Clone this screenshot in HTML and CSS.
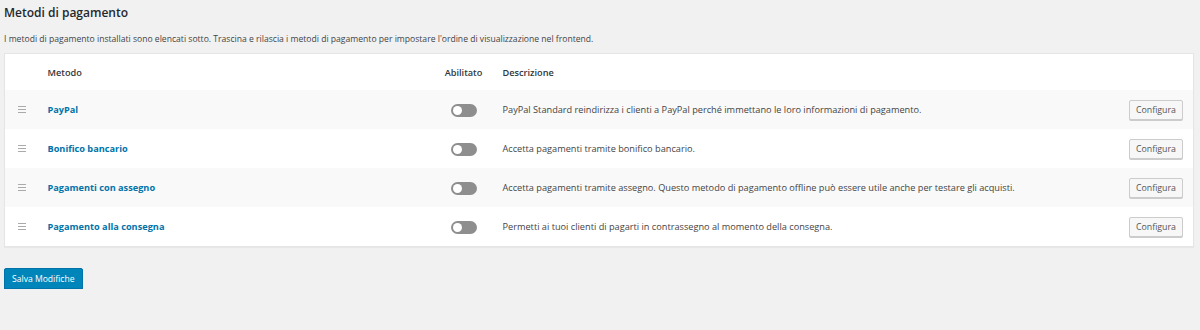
FILE: index.html
```html
<!DOCTYPE html>
<html lang="it">

<head>
    <meta charset="UTF-8">
    <meta name="viewport" content="width=device-width, initial-scale=1.0">
    <title>Metodi di pagamento</title>
    <link rel="stylesheet" href="styles.css">
</head>

<body>
    <h2 class="title">Metodi di pagamento</h2>
    <p class="intro">I metodi di pagamento installati sono elencati sotto. Trascina e rilascia i metodi di pagamento per impostare l'ordine di visualizzazione nel frontend.</p>

    <table class="gateways">
        <colgroup>
            <col class="col-sort">
            <col class="col-name">
            <col class="col-status">
            <col class="col-desc">
            <col class="col-action">
        </colgroup>
        <thead>
            <tr>
                <th></th>
                <th class="name">Metodo</th>
                <th class="status">Abilitato</th>
                <th class="desc">Descrizione</th>
                <th></th>
            </tr>
        </thead>
        <tbody>
            <tr>
                <td class="sort"><span class="handle"></span></td>
                <td class="name"><a href="#">PayPal</a></td>
                <td class="status"><span class="toggle"></span></td>
                <td class="desc">PayPal Standard reindirizza i clienti a PayPal perché immettano le loro informazioni di pagamento.</td>
                <td class="action"><button class="btn">Configura</button></td>
            </tr>
            <tr>
                <td class="sort"><span class="handle"></span></td>
                <td class="name"><a href="#">Bonifico bancario</a></td>
                <td class="status"><span class="toggle"></span></td>
                <td class="desc">Accetta pagamenti tramite bonifico bancario.</td>
                <td class="action"><button class="btn">Configura</button></td>
            </tr>
            <tr>
                <td class="sort"><span class="handle"></span></td>
                <td class="name"><a href="#">Pagamenti con assegno</a></td>
                <td class="status"><span class="toggle"></span></td>
                <td class="desc">Accetta pagamenti tramite assegno. Questo metodo di pagamento offline può essere utile anche per testare gli acquisti.</td>
                <td class="action"><button class="btn">Configura</button></td>
            </tr>
            <tr>
                <td class="sort"><span class="handle"></span></td>
                <td class="name"><a href="#">Pagamento alla consegna</a></td>
                <td class="status"><span class="toggle"></span></td>
                <td class="desc">Permetti ai tuoi clienti di pagarti in contrassegno al momento della consegna.</td>
                <td class="action"><button class="btn">Configura</button></td>
            </tr>
        </tbody>
    </table>

    <button class="btn-primary">Salva Modifiche</button>
</body>

</html>
```

FILE: styles.css
```css
body {
    margin: 0;
    padding: 0 6px 0 4px;
    background-color: #f1f1f1;
    font-family: "Open Sans", sans-serif;
    font-size: 8.6px;
    color: #444;
}

.title {
    margin: 0;
    padding-top: 5px;
    font-size: 12px;
    font-weight: 600;
    line-height: 16px;
    color: #23282d;
}

.intro {
    margin: 12px 0 8px;
    line-height: 12px;
    color: #444;
}

.gateways {
    width: 1190px;
    border-collapse: collapse;
    table-layout: fixed;
    background-color: #fff;
    border: 1px solid #e5e5e5;
    box-shadow: 0 1px 1px rgba(0, 0, 0, 0.04);
    font-size: 9.2px;
}

.col-sort {
    width: 32px;
}

.col-name {
    width: 398px;
}

.col-status {
    width: 58px;
}

.col-action {
    width: 74px;
}

.gateways th {
    height: 36px;
    padding: 0;
    text-align: left;
    font-weight: 600;
    color: #32373c;
}

.gateways td {
    height: 39px;
    padding: 0;
    vertical-align: middle;
}

.gateways tbody tr:nth-child(odd) {
    background-color: #f9f9f9;
}

.gateways .name {
    padding-left: 11px;
}

.gateways .name a {
    color: #0073aa;
    font-weight: 700;
    text-decoration: none;
}

.gateways .status {
    text-align: center;
}

.gateways .desc {
    padding-left: 10px;
}

.gateways .action {
    text-align: right;
    padding-right: 10px;
}

.handle {
    display: block;
    width: 8px;
    height: 5px;
    margin-left: 13px;
    border-top: 1px solid #aaa;
    border-bottom: 1px solid #aaa;
    position: relative;
}

.handle::after {
    content: "";
    position: absolute;
    left: 0;
    right: 0;
    top: 2px;
    border-top: 1px solid #aaa;
}

.toggle {
    display: inline-block;
    position: relative;
    width: 26px;
    height: 13px;
    border-radius: 7px;
    background-color: #8e8e8e;
    vertical-align: middle;
}

.toggle::after {
    content: "";
    position: absolute;
    left: 2px;
    top: 2px;
    width: 9px;
    height: 9px;
    border-radius: 50%;
    background-color: #fff;
}

.btn {
    height: 20px;
    padding: 0 6px;
    font-family: inherit;
    font-size: 8.8px;
    color: #555;
    background-color: #f7f7f7;
    border: 1px solid #ccc;
    border-radius: 2px;
    box-shadow: 0 1px 0 #ccc;
    cursor: pointer;
}

.btn-primary {
    margin-top: 21px;
    height: 21px;
    padding: 0 7px;
    font-family: inherit;
    font-size: 8.6px;
    color: #fff;
    background-color: #0085ba;
    border: 1px solid #0073aa;
    border-radius: 2px;
    box-shadow: 0 1px 0 #006799;
    cursor: pointer;
}
```
